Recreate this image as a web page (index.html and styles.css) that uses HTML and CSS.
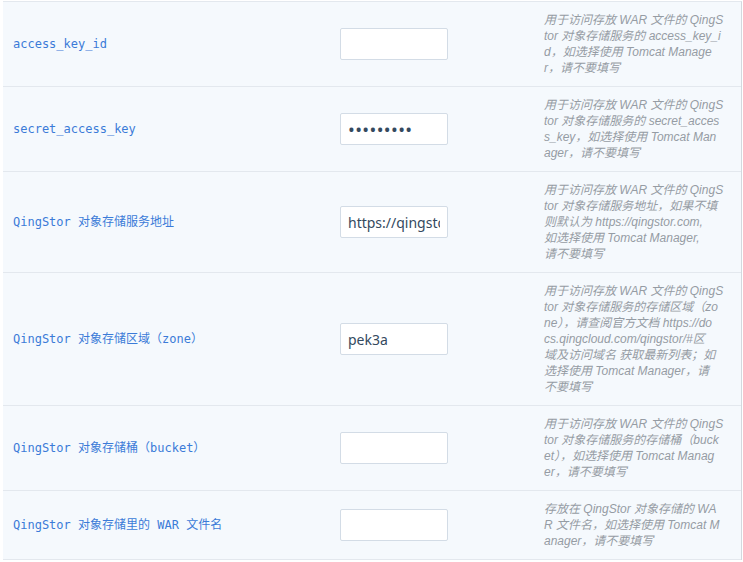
FILE: index.html
```html
<!DOCTYPE html>
<html lang="zh">
<head>
<meta charset="utf-8">
<link rel="stylesheet" href="styles.css">
</head>
<body>
<div class="form">
  <div class="row">
    <div class="label">access_key_id</div>
    <div class="field"><input class="input" type="text" value=""></div>
    <div class="desc">用于访问存放 WAR 文件的 QingS<br>tor 对象存储服务的 access_key_i<br>d，如选择使用 Tomcat Manage<br>r，请不要填写</div>
  </div>
  <div class="row">
    <div class="label">secret_access_key</div>
    <div class="field"><input class="input input-password" type="password" value="123456789"></div>
    <div class="desc">用于访问存放 WAR 文件的 QingS<br>tor 对象存储服务的 secret_acces<br>s_key，如选择使用 Tomcat Man<br>ager，请不要填写</div>
  </div>
  <div class="row">
    <div class="label">QingStor 对象存储服务地址</div>
    <div class="field"><input class="input" type="text" value="https://qingstor.com"></div>
    <div class="desc">用于访问存放 WAR 文件的 QingS<br>tor 对象存储服务地址，如果不填<br>则默认为 https://qingstor.com,<br>如选择使用 Tomcat Manager,<br>请不要填写</div>
  </div>
  <div class="row">
    <div class="label">QingStor 对象存储区域（zone）</div>
    <div class="field"><input class="input" type="text" value="pek3a"></div>
    <div class="desc">用于访问存放 WAR 文件的 QingS<br>tor 对象存储服务的存储区域（zo<br>ne），请查阅官方文档 https://do<br>cs.qingcloud.com/qingstor/#区<br>域及访问域名 获取最新列表；如<br>选择使用 Tomcat Manager，请<br>不要填写</div>
  </div>
  <div class="row">
    <div class="label">QingStor 对象存储桶（bucket）</div>
    <div class="field"><input class="input" type="text" value=""></div>
    <div class="desc">用于访问存放 WAR 文件的 QingS<br>tor 对象存储服务的存储桶（buck<br>et），如选择使用 Tomcat Manag<br>er，请不要填写</div>
  </div>
  <div class="row">
    <div class="label">QingStor 对象存储里的 WAR 文件名</div>
    <div class="field"><input class="input" type="text" value=""></div>
    <div class="desc">存放在 QingStor 对象存储的 WA<br>R 文件名，如选择使用 Tomcat M<br>anager，请不要填写</div>
  </div>
</div>
</body>
</html>
```
FILE: styles.css
```css
html, body {
  margin: 0;
  padding: 0;
  background: #ffffff;
}

.form {
  margin: 1px 0 0 3px;
  width: 738px;
  border-top: 1px solid #e3e8ee;
  border-right: 1px solid #d3d8de;
  background: #f5f9fd;
}

.row {
  display: grid;
  grid-template-columns: 327px 190px 1fr;
  align-items: center;
  border-bottom: 1px solid #e3e8ee;
  padding: 10px 0;
}

.label {
  padding-left: 10px;
  font-family: "DejaVu Sans Mono", "Noto Sans CJK SC", monospace;
  font-size: 12px;
  color: #3b7bd8;
  line-height: 16px;
}

.field {
  padding-left: 10px;
}

.input {
  box-sizing: border-box;
  width: 108px;
  height: 32px;
  margin: 0;
  padding: 0 7px;
  border: 1px solid #d3dce6;
  border-radius: 2px;
  background: #ffffff;
  font-family: "Noto Sans", "Noto Sans CJK SC", sans-serif;
  font-size: 14px;
  color: #34495e;
  outline: none;
}

.input-password {
  font-size: 18px;
  letter-spacing: 0.4px;
}

.desc {
  padding: 0 4px 0 24px;
  font-family: "Liberation Sans", "Noto Sans CJK SC", sans-serif;
  font-style: italic;
  font-size: 12px;
  line-height: 16px;
  color: #959ca4;
  white-space: nowrap;
}
```
